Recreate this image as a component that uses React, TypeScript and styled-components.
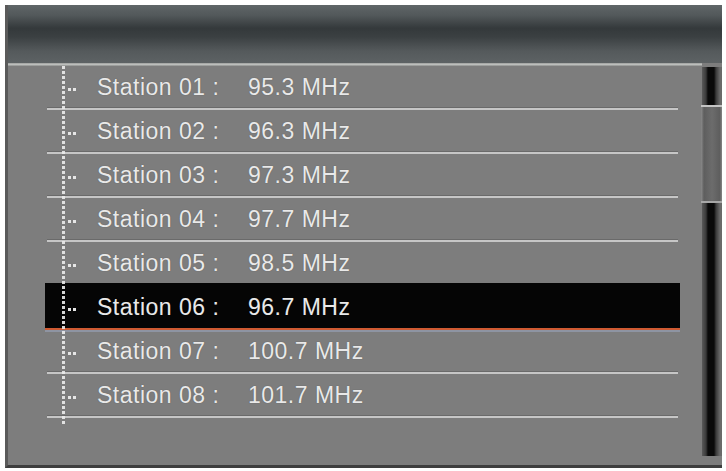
import React from "react";
import styled, { createGlobalStyle } from "styled-components";

const Global = createGlobalStyle`
  html, body { margin: 0; padding: 0; background: #ffffff; }
  body { font-family: "Liberation Sans", Arial, sans-serif; }
`;

const Screen = styled.div`
  margin: 5px 0 0 5px;
  width: 717px;
  height: 463px;
  background: #7d7d7d;
  display: flex;
  flex-direction: column;
  box-sizing: border-box;
  border-left: 3px solid #5a5a5a;
  border-bottom: 3px solid #3e3e3e;
  overflow: hidden;
`;

const Header = styled.div`
  height: 58px;
  flex: none;
  background: linear-gradient(
    to bottom,
    #606668 0%,
    #52585a 18%,
    #34393b 40%,
    #3b4042 55%,
    #555a5c 80%,
    #5d6264 100%
  );
`;

const HeaderLine = styled.div`
  height: 3px;
  flex: none;
  background: linear-gradient(to bottom, #9c9e9c, #bcbebc 50%, #8e908e);
  margin-right: 20px;
`;

const Body = styled.div`
  flex: 1;
  display: flex;
  flex-direction: row;
  min-height: 0;
`;

const ListArea = styled.div`
  position: relative;
  width: 637px;
  margin-left: 37px;
  display: flex;
  flex-direction: column;
`;

const DottedLine = styled.div`
  position: absolute;
  left: 17px;
  top: 0;
  width: 3px;
  height: 359px;
  background: repeating-linear-gradient(
    to bottom,
    #ececec 0px,
    #ececec 3px,
    transparent 3px,
    transparent 5px
  );
  opacity: 0.9;
`;

const Row = styled.div<{ $selected?: boolean }>`
  height: ${(p) => (p.$selected ? 47 : 44)}px;
  margin-top: ${(p) => (p.$selected ? -3 : 0)}px;
  padding-top: ${(p) => (p.$selected ? 3 : 0)}px;
  box-sizing: border-box;
  flex: none;
  display: flex;
  align-items: center;
  padding-left: ${(p) => (p.$selected ? 23 : 21)}px;
  margin-right: ${(p) => (p.$selected ? 0 : 2)}px;
  margin-left: ${(p) => (p.$selected ? 0 : 2)}px;
  background: ${(p) => (p.$selected ? "#050505" : "transparent")};
  border-bottom: 2px solid ${(p) => (p.$selected ? "#cf5a32" : "#c6c6c6")};
  box-shadow: ${(p) =>
    p.$selected ? "0 2px 0 #8e94a2" : "inset 0 -1px 0 #6a6a6a"};
`;

const Leader = styled.span`
  width: 9px;
  height: 3px;
  margin-top: 5px;
  margin-right: 20px;
  background: repeating-linear-gradient(
    to right,
    #e6e6e6 0px,
    #e6e6e6 3px,
    transparent 3px,
    transparent 5px
  );
`;

const Label = styled.span`
  width: 151px;
  font-size: 23px;
  letter-spacing: 0.5px;
  color: #e9e9e9;
  white-space: pre;
  text-shadow: 0 0 1px rgba(40, 40, 40, 0.5);
`;

const Freq = styled(Label)`
  width: auto;
`;

const ScrollCol = styled.div`
  width: 20px;
  margin-left: 22px;
  padding-top: 1px;
  padding-bottom: 9px;
  display: flex;
  flex-direction: column;
`;

const Track = styled.div`
  flex: 1;
  position: relative;
  background: linear-gradient(
    to right,
    #5a5a5a 0px,
    #3a3a3a 4px,
    #0a0a0a 6px,
    #0a0a0a 12px,
    #3a3a3a 14px,
    #6a6a6a 18px
  );
`;

const Thumb = styled.div`
  position: absolute;
  left: -1px;
  right: -1px;
  top: 38px;
  height: 98px;
  box-sizing: border-box;
  border-top: 2px solid #c4c4c4;
  border-bottom: 2px solid #a8a8a8;
  background: linear-gradient(
    to right,
    #8a8a8a 0px,
    #5e5e5e 3px,
    #6c6c6c 50%,
    #5e5e5e 85%,
    #9a9a9a 100%
  );
`;

const stations = [
  ["01", "95.3"],
  ["02", "96.3"],
  ["03", "97.3"],
  ["04", "97.7"],
  ["05", "98.5"],
  ["06", "96.7"],
  ["07", "100.7"],
  ["08", "101.7"],
];

export default function App() {
  return (
    <>
      <Global />
      <Screen>
        <Header />
        <HeaderLine />
        <Body>
          <ListArea>
            {stations.map(([n, f], i) => (
              <Row key={n} $selected={i === 5}>
                <Leader />
                <Label>{`Station ${n} :`}</Label>
                <Freq>{`${f} MHz`}</Freq>
              </Row>
            ))}
            <DottedLine />
          </ListArea>
          <ScrollCol>
            <Track>
              <Thumb />
            </Track>
          </ScrollCol>
        </Body>
      </Screen>
    </>
  );
}
